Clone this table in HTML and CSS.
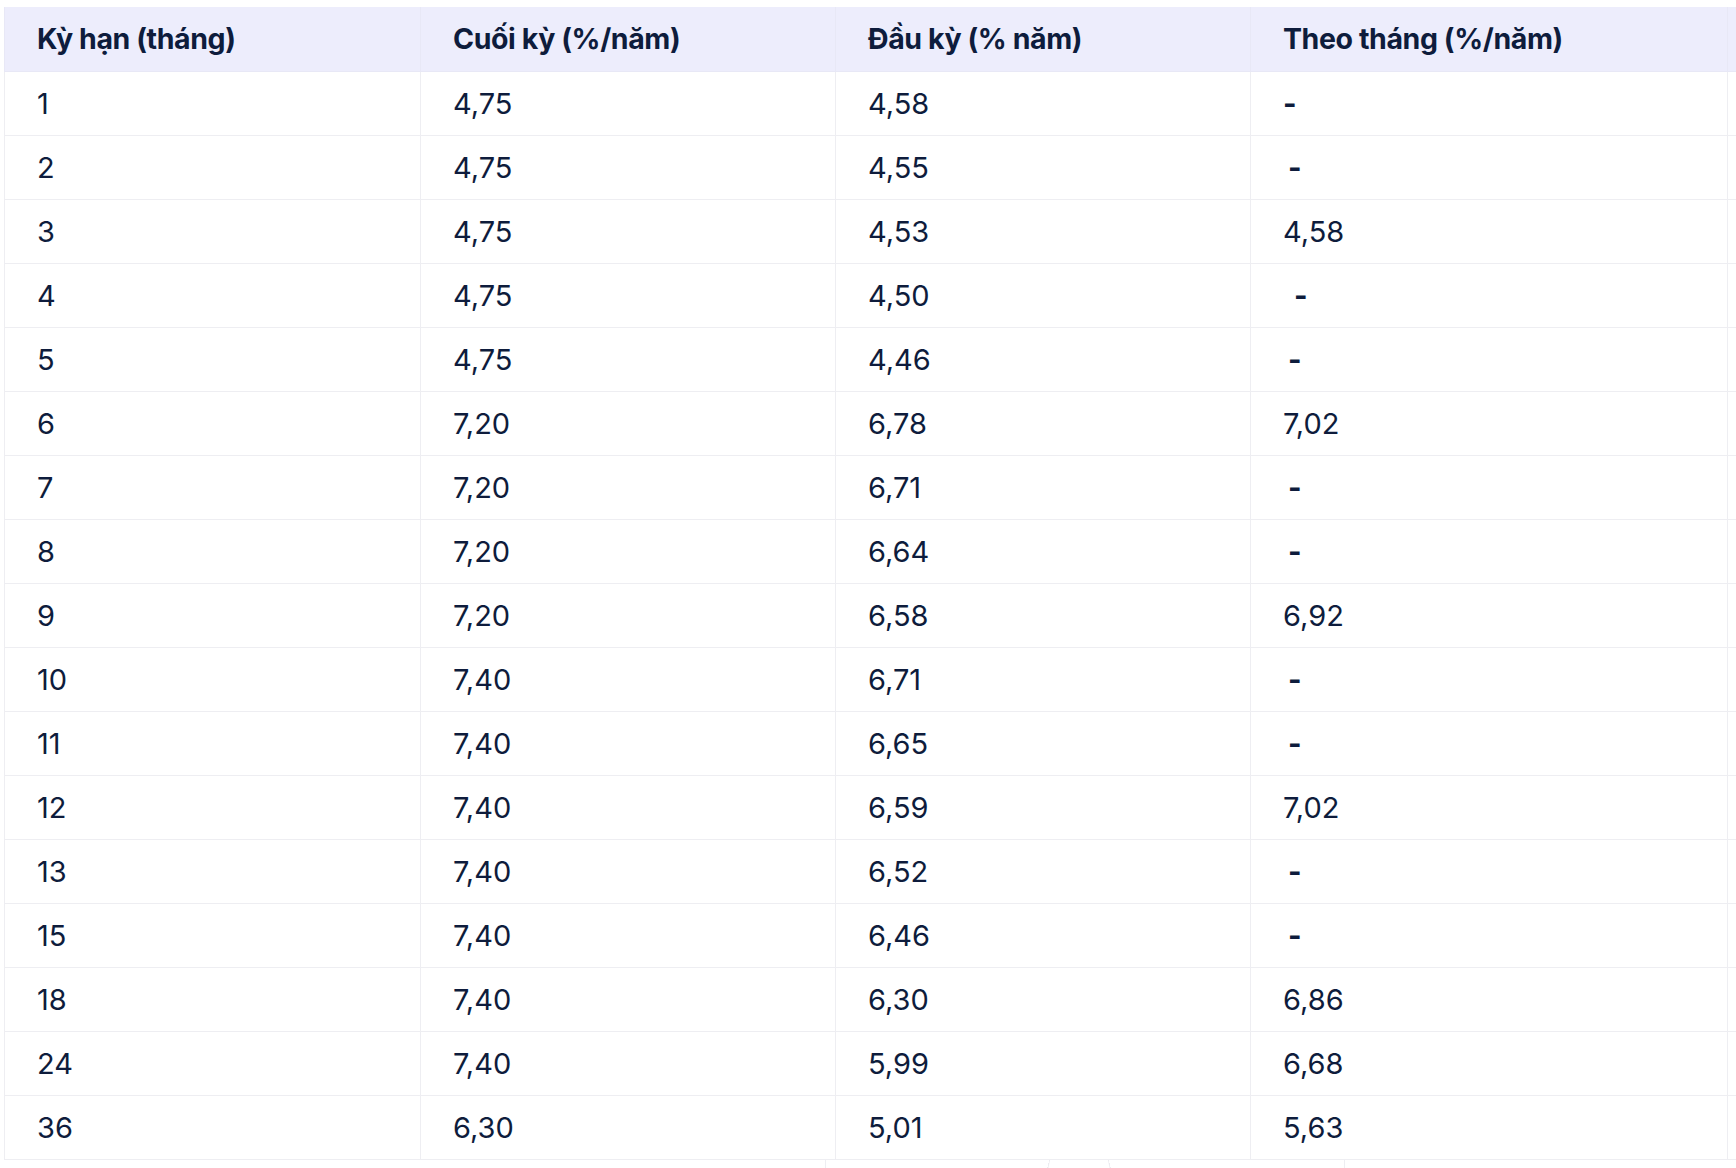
FILE: index.html
```html
<!DOCTYPE html>
<html lang="vi">
<head>
<meta charset="utf-8">
<link rel="stylesheet" href="styles.css">
</head>
<body>
<div class="page">
<table class="rates">
  <colgroup>
    <col class="c1"><col class="c2"><col class="c3"><col class="c4"><col class="c5">
  </colgroup>
  <thead>
    <tr><th>Kỳ hạn (tháng)</th><th>Cuối kỳ (%/năm)</th><th>Đầu kỳ (% năm)</th><th>Theo tháng (%/năm)</th><th></th></tr>
  </thead>
  <tbody>
    <tr><td>1</td><td>4,75</td><td>4,58</td><td><span class="dash">-</span></td><td></td></tr>
    <tr><td>2</td><td>4,75</td><td>4,55</td><td><span class="dash o1">-</span></td><td></td></tr>
    <tr><td>3</td><td>4,75</td><td>4,53</td><td>4,58</td><td></td></tr>
    <tr><td>4</td><td>4,75</td><td>4,50</td><td><span class="dash o2">-</span></td><td></td></tr>
    <tr><td>5</td><td>4,75</td><td>4,46</td><td><span class="dash o1">-</span></td><td></td></tr>
    <tr><td>6</td><td>7,20</td><td>6,78</td><td>7,02</td><td></td></tr>
    <tr><td>7</td><td>7,20</td><td>6,71</td><td><span class="dash o1">-</span></td><td></td></tr>
    <tr><td>8</td><td>7,20</td><td>6,64</td><td><span class="dash o1">-</span></td><td></td></tr>
    <tr><td>9</td><td>7,20</td><td>6,58</td><td>6,92</td><td></td></tr>
    <tr><td>10</td><td>7,40</td><td>6,71</td><td><span class="dash o1">-</span></td><td></td></tr>
    <tr><td>11</td><td>7,40</td><td>6,65</td><td><span class="dash o1">-</span></td><td></td></tr>
    <tr><td>12</td><td>7,40</td><td>6,59</td><td>7,02</td><td></td></tr>
    <tr><td>13</td><td>7,40</td><td>6,52</td><td><span class="dash o1">-</span></td><td></td></tr>
    <tr><td>15</td><td>7,40</td><td>6,46</td><td><span class="dash o1">-</span></td><td></td></tr>
    <tr><td>18</td><td>7,40</td><td>6,30</td><td>6,86</td><td></td></tr>
    <tr><td>24</td><td>7,40</td><td>5,99</td><td>6,68</td><td></td></tr>
    <tr><td>36</td><td>6,30</td><td>5,01</td><td>5,63</td><td></td></tr>
  </tbody>
</table>
<div class="strip">
  <div class="strip-gap"></div>
  <div class="strip-box">
    <div class="strip-gap2"></div>
    <div class="tab"></div>
  </div>
</div>
</div>
</body>
</html>
```
FILE: styles.css
```css
html, body {
  margin: 0;
  padding: 0;
  background: #ffffff;
  overflow: hidden;
}
.page {
  width: 1736px;
  height: 1168px;
  overflow: hidden;
  padding-top: 7px;
  padding-left: 4px;
  box-sizing: border-box;
}
.rates {
  border-collapse: collapse;
  table-layout: fixed;
  width: 2000px;
  font-family: Inter, "Noto Sans", sans-serif;
  color: #0e1c3c;
}
.c1 { width: 416px; }
.c2 { width: 415px; }
.c3 { width: 415px; }
.c4 { width: 477px; }
.c5 { width: 277px; }
.rates th, .rates td {
  height: 64px;
  padding: 0 0 0 32px;
  border: 1px solid #eeeef2;
  text-align: left;
  vertical-align: middle;
  white-space: nowrap;
  box-sizing: border-box;
}
.rates thead th {
  background: #ededfc;
  font-weight: 700;
  font-size: 28.5px;
  letter-spacing: -0.4px;
  border-color: #e8e8f6;
  border-top: none;
}
.rates td {
  font-size: 29px;
  font-weight: 400;
}
.dash { display: inline-block; font-weight: 700; }
.o1 { padding-left: 5px; }
.o2 { padding-left: 11px; }
.strip {
  display: flex;
  height: 10px;
}
.strip-gap { width: 821px; flex: none; }
.strip-box {
  width: 518px;
  flex: none;
  border-left: 1px solid #eeeef2;
  border-right: 1px solid #eeeef2;
  display: flex;
}
.strip-gap2 { width: 222px; flex: none; }
.tab {
  width: 60px;
  height: 10px;
  border-left: 1px solid #ececf0;
  border-right: 1px solid #ececf0;
  transform: perspective(20px) rotateX(8deg);
}
```
